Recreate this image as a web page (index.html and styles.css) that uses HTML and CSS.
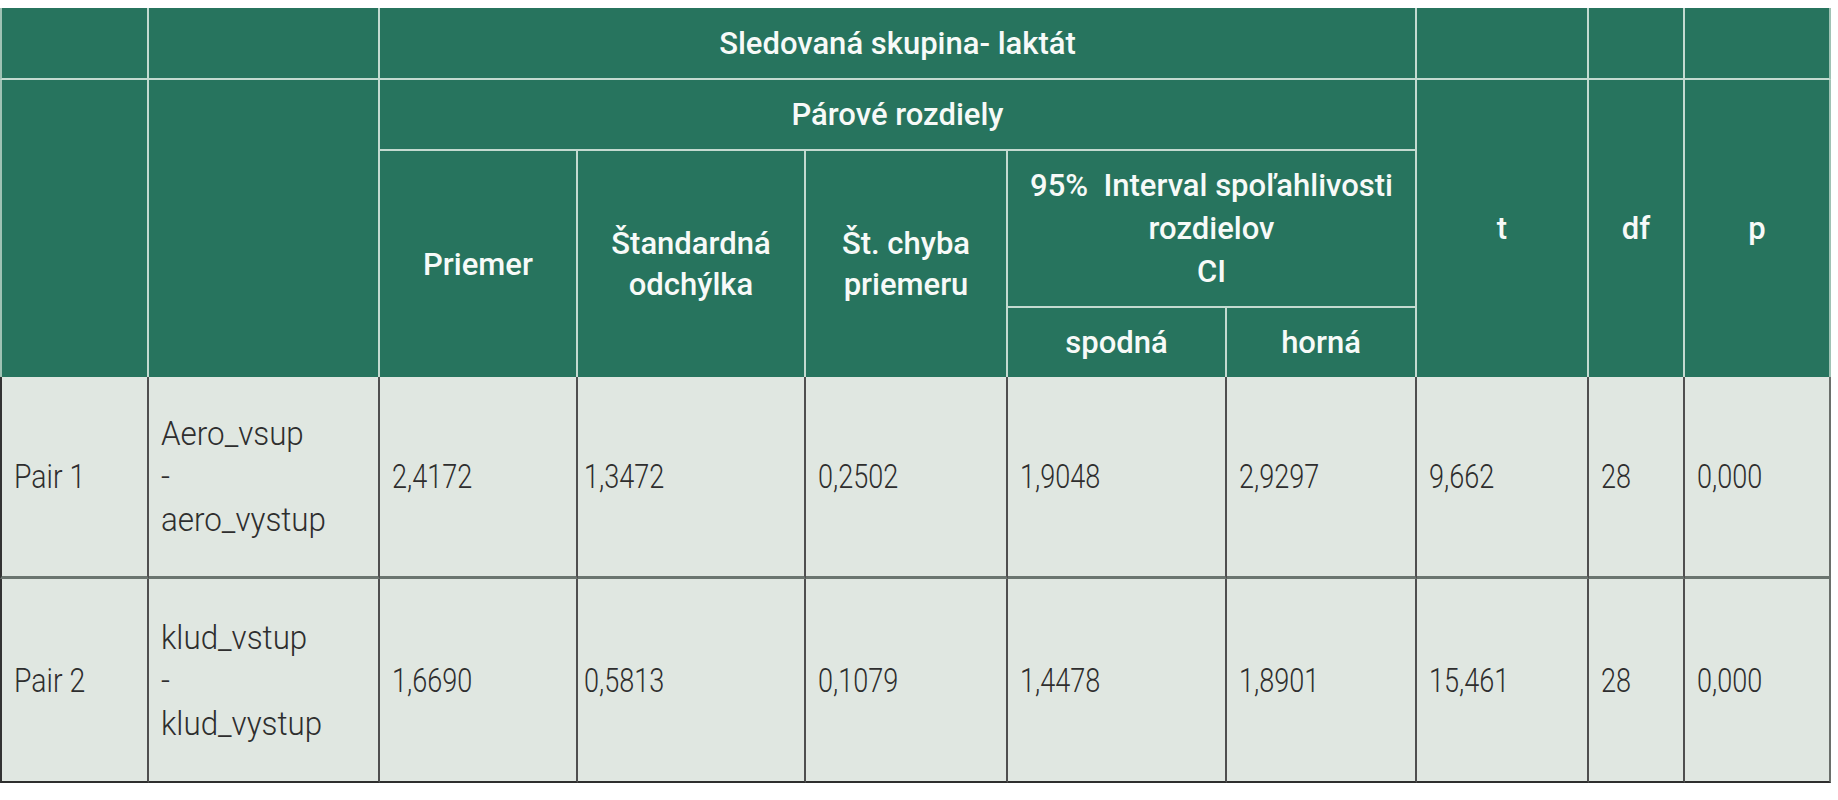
FILE: index.html
```html
<!DOCTYPE html>
<html lang="sk">
<head>
<meta charset="utf-8">
<title>Sledovaná skupina - laktát</title>
<link rel="stylesheet" href="styles.css">
</head>
<body>
<div class="page">
  <div class="stats">
    <div class="h first"></div>
    <div class="h"></div>
    <div class="h span5">Sledovaná skupina- laktát</div>
    <div class="h"></div>
    <div class="h"></div>
    <div class="h last"></div>

    <div class="h first rows3"></div>
    <div class="h rows3"></div>
    <div class="h span5">Párové rozdiely</div>
    <div class="h rows3">t</div>
    <div class="h rows3">df</div>
    <div class="h rows3 last">p</div>

    <div class="h rows2 nob">Priemer</div>
    <div class="h rows2 nob">Štandardná<br>odchýlka</div>
    <div class="h rows2 nob">Št. chyba<br>priemeru</div>
    <div class="h span2 ci">95%&nbsp; Interval spoľahlivosti<br>rozdielov<br>CI</div>

    <div class="h nob">spodná</div>
    <div class="h nob">horná</div>

    <div class="d first r1"><span class="txt pair">Pair 1</span></div>
    <div class="d r1"><span class="txt name">Aero_vsup<br>-<br>aero_vystup</span></div>
    <div class="d r1"><span class="txt">2,4172</span></div>
    <div class="d r1 tight"><span class="txt">1,3472</span></div>
    <div class="d r1"><span class="txt">0,2502</span></div>
    <div class="d r1"><span class="txt">1,9048</span></div>
    <div class="d r1"><span class="txt">2,9297</span></div>
    <div class="d r1"><span class="txt">9,662</span></div>
    <div class="d r1"><span class="txt">28</span></div>
    <div class="d r1 last"><span class="txt">0,000</span></div>

    <div class="d first r2"><span class="txt pair">Pair 2</span></div>
    <div class="d r2"><span class="txt name">klud_vstup<br>-<br>klud_vystup</span></div>
    <div class="d r2"><span class="txt">1,6690</span></div>
    <div class="d r2 tight"><span class="txt">0,5813</span></div>
    <div class="d r2"><span class="txt">0,1079</span></div>
    <div class="d r2"><span class="txt">1,4478</span></div>
    <div class="d r2"><span class="txt">1,8901</span></div>
    <div class="d r2"><span class="txt">15,461</span></div>
    <div class="d r2"><span class="txt">28</span></div>
    <div class="d r2 last"><span class="txt">0,000</span></div>
  </div>
</div>
</body>
</html>
```
FILE: styles.css
```css
html, body {
  margin: 0;
  padding: 0;
  background: #ffffff;
}

.page {
  padding-top: 8px;
}

.stats {
  display: grid;
  width: 1831px;
  grid-template-columns: 149px 231px 198px 228px 202px 219px 190px 172px 96px 146px;
  grid-template-rows: 72px 71px 157px 69px 202px 204px;
  grid-auto-flow: row;
}

.stats > div {
  box-sizing: border-box;
}

.span5 { grid-column: span 5; }
.span2 { grid-column: span 2; }
.rows3 { grid-row: span 3; }
.rows2 { grid-row: span 2; }

.h {
  background: #27745e;
  color: #f7faf8;
  font-family: Roboto, "Liberation Sans", sans-serif;
  font-weight: 500;
  font-size: 31px;
  line-height: 41px;
  text-align: center;
  display: flex;
  align-items: center;
  justify-content: center;
  border-right: 2px solid #c3dad0;
  border-bottom: 2px solid #c3dad0;
}

.h.nob {
  border-bottom: none;
}

.h.rows3 {
  border-bottom: none;
}

.h.first {
  border-left: 2px solid #9fc2b4;
}

.h.last {
  border-right: 2px solid #9fc2b4;
}

.h.ci {
  line-height: 43px;
}

.d {
  background: #e0e7e1;
  color: #2e2e2e;
  font-family: Roboto, "Liberation Sans", sans-serif;
  font-weight: 300;
  font-size: 33px;
  line-height: 43px;
  display: flex;
  align-items: center;
  padding-left: 12px;
  border-right: 2px solid #4f4f4f;
}

.d .txt {
  display: inline-block;
  transform: scaleX(0.82);
  transform-origin: left center;
  white-space: nowrap;
}

.d .txt.pair {
  transform: scaleX(0.86);
}

.d .txt.name {
  transform: scaleX(0.95);
}

.d.first {
  border-left: 2px solid #333333;
}

.d.last {
  border-right: 2px solid #6a6f6b;
}

.d.tight {
  padding-left: 6px;
}

.d.r1 {
  border-bottom: 3px solid #6b756f;
}

.d.r2 {
  border-bottom: 2px solid #2e2e2e;
}
```
